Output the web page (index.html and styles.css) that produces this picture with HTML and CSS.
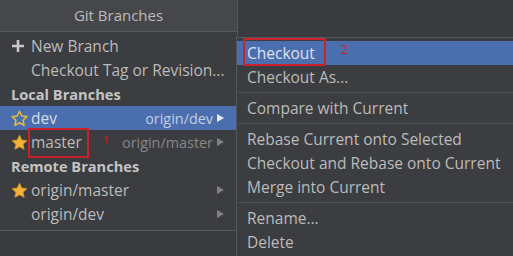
FILE: index.html
```html
<!DOCTYPE html>
<html lang="en">
<head>
<meta charset="UTF-8" />
<title>Git Branches</title>
<link rel="stylesheet" href="styles.css">
</head>
<body>
  <div class="popup">
    <div class="title">Git Branches</div>
    <div class="list">
      <div class="row">
        <span class="icon">
          <svg width="14" height="14" viewBox="0 0 14 14"><path d="M7 1v12M1 7h12" stroke="#c8c8c8" stroke-width="2.6"/></svg>
        </span>
        <span class="name">New Branch</span>
      </div>
      <div class="row">
        <span class="icon"></span>
        <span class="name">Checkout Tag or Revision...</span>
      </div>
      <div class="row head">Local Branches</div>
      <div class="row selected">
        <span class="icon">
          <svg width="17" height="17" viewBox="0 0 20 20"><path d="M10 1.5l2.6 5.6 6.1.7-4.5 4.2 1.2 6-5.4-3-5.4 3 1.2-6-4.5-4.2 6.1-.7z" fill="none" stroke="#e9b840" stroke-width="1.8" stroke-linejoin="round"/></svg>
        </span>
        <span class="name">dev</span>
        <span class="remote">origin/dev</span>
        <span class="arrow"></span>
      </div>
      <div class="row">
        <span class="icon">
          <svg width="17" height="17" viewBox="0 0 20 20"><path d="M10 1.5l2.6 5.6 6.1.7-4.5 4.2 1.2 6-5.4-3-5.4 3 1.2-6-4.5-4.2 6.1-.7z" fill="#f3b33a" stroke="#d89a22" stroke-width="1" stroke-linejoin="round"/></svg>
        </span>
        <span class="name"><span class="marked">master</span></span>
        <span class="step">1</span>
        <span class="remote">origin/master</span>
        <span class="arrow"></span>
      </div>
      <div class="row head">Remote Branches</div>
      <div class="row">
        <span class="icon">
          <svg width="17" height="17" viewBox="0 0 20 20"><path d="M10 1.5l2.6 5.6 6.1.7-4.5 4.2 1.2 6-5.4-3-5.4 3 1.2-6-4.5-4.2 6.1-.7z" fill="#f3b33a" stroke="#d89a22" stroke-width="1" stroke-linejoin="round"/></svg>
        </span>
        <span class="name">origin/master</span>
        <span class="arrow"></span>
      </div>
      <div class="row">
        <span class="icon"></span>
        <span class="name">origin/dev</span>
        <span class="arrow"></span>
      </div>
    </div>
  </div>

  <!-- submenu for the selected branch -->
  <div class="submenu">
    <div class="item selected"><span class="marked wide">Checkout</span><span class="step">2</span></div>
    <div class="item">Checkout As...</div>
    <div class="sep"></div>
    <div class="item">Compare with Current</div>
    <div class="sep"></div>
    <div class="item">Rebase Current onto Selected</div>
    <div class="item">Checkout and Rebase onto Current</div>
    <div class="item">Merge into Current</div>
    <div class="sep"></div>
    <div class="item">Rename...</div>
    <div class="item">Delete</div>
  </div>
</body>
</html>
```

FILE: styles.css
```css
body {
    margin: 0;
    width: 513px;
    height: 256px;
    overflow: hidden;
    background-color: #3a3b3e;
    color: #bbbbbb;
    font-family: "Open Sans", "Noto Sans", sans-serif;
    font-size: 15.5px;
    position: relative;
}
.popup {
    width: 237px;
    border-right: 1px solid #55575a;
    border-bottom: 1px solid #55575a;
    background-color: #3c3d40;
}
.title {
    height: 31px;
    line-height: 30px;
    text-align: center;
    background-color: #46474a;
    border-bottom: 1px solid #55575a;
    font-size: 15px;
}
.list {
    padding: 2px 0 4px;
}
.row {
    height: 24px;
    display: flex;
    align-items: center;
    padding: 0 12px 0 11px;
    white-space: nowrap;
}
.row.head {
    font-weight: bold;
    font-size: 14.6px;
    color: #c4c4c4;
    padding-left: 11px;
}
.row.selected {
    background-color: #4b6eaf;
    color: #d8dde6;
}
.icon {
    width: 20px;
    display: flex;
    align-items: center;
    justify-content: flex-start;
}
.name {
    flex: none;
}
.remote {
    margin-left: auto;
    font-size: 14.4px;
    color: #86878a;
}
.row.selected .remote {
    color: #c3cde0;
}
.arrow {
    width: 0;
    height: 0;
    margin-left: 4px;
    margin-right: 1px;
    border-top: 4px solid transparent;
    border-bottom: 4px solid transparent;
    border-left: 7px solid #808184;
}
.row .name + .arrow {
    margin-left: auto;
}
.row.selected .arrow {
    border-left-color: #e6ebf3;
}
.marked {
    position: relative;
}
.marked::after {
    content: "";
    position: absolute;
    left: -3px;
    right: -7px;
    top: -3px;
    bottom: -5px;
    border: 2px solid #c8232b;
}
.marked.wide::after {
    left: -4px;
    right: -11px;
    top: -4px;
    bottom: -2px;
}
.step {
    color: #c8232b;
    font-size: 11px;
    margin-left: 21px;
    position: relative;
    top: -3px;
}
.submenu {
    position: absolute;
    left: 236px;
    top: 37px;
    width: 277px;
    height: 224px;
    background-color: #3c3d40;
    border-left: 1px solid #55575a;
    border-top: 1px solid #55575a;
    padding-top: 3px;
}
.item {
    height: 24px;
    line-height: 24px;
    padding-left: 10px;
    white-space: nowrap;
}
.item.selected {
    background-color: #4b6eaf;
    color: #dde3ee;
}
.item .step {
    font-size: 12px;
    margin-left: 26px;
    top: -5px;
}
.sep {
    height: 1px;
    margin: 3px 0 3px 1px;
    background-color: #505255;
}
```
